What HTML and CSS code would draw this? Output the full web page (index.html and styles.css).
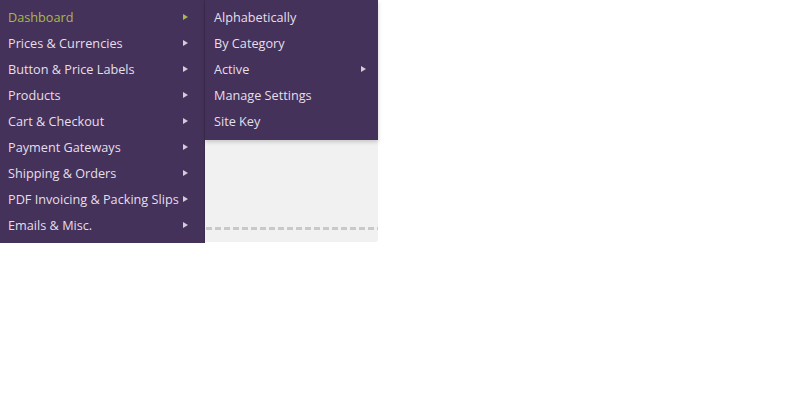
FILE: index.html
```
<!DOCTYPE html>
<html>
<head>
<meta charset="utf-8">
<link rel="stylesheet" href="styles.css">
</head>
<body>
<div class="page">
  <nav class="menu">
    <ul class="menu-list">
      <li class="menu-item active"><span class="label">Dashboard</span><span class="arrow"></span></li>
      <li class="menu-item"><span class="label">Prices &amp; Currencies</span><span class="arrow"></span></li>
      <li class="menu-item"><span class="label">Button &amp; Price Labels</span><span class="arrow"></span></li>
      <li class="menu-item"><span class="label">Products</span><span class="arrow"></span></li>
      <li class="menu-item"><span class="label">Cart &amp; Checkout</span><span class="arrow"></span></li>
      <li class="menu-item"><span class="label">Payment Gateways</span><span class="arrow"></span></li>
      <li class="menu-item"><span class="label">Shipping &amp; Orders</span><span class="arrow"></span></li>
      <li class="menu-item"><span class="label">PDF Invoicing &amp; Packing Slips</span><span class="arrow"></span></li>
      <li class="menu-item"><span class="label">Emails &amp; Misc.</span><span class="arrow"></span></li>
    </ul>
    <ul class="submenu">
      <li class="sub-item"><span class="label">Alphabetically</span></li>
      <li class="sub-item"><span class="label">By Category</span></li>
      <li class="sub-item"><span class="label">Active</span><span class="arrow"></span></li>
      <li class="sub-item"><span class="label">Manage Settings</span></li>
      <li class="sub-item"><span class="label">Site Key</span></li>
    </ul>
  </nav>
  <main class="content">
    <div class="dashes"></div>
  </main>
</div>
</body>
</html>
```
FILE: styles.css
```
html, body {
  margin: 0;
  padding: 0;
  background: #ffffff;
}
body {
  font-family: "Open Sans", "Liberation Sans", sans-serif;
  font-size: 12.7px;
}
.page {
  display: flex;
  align-items: flex-start;
}
.menu {
  position: relative;
  width: 205px;
  height: 243px;
  background: #45325a;
  box-sizing: border-box;
  border-right: 1px solid #3d2c50;
}
.menu-list, .submenu {
  list-style: none;
  margin: 0;
  padding: 4px 0 5px;
}
.menu-item, .sub-item {
  display: flex;
  align-items: center;
  justify-content: space-between;
  height: 26px;
  padding: 0 16px 0 8px;
  color: #e4dfe9;
}
.menu-item.active {
  color: #a9b84a;
}
.arrow {
  flex: none;
  width: 0;
  height: 0;
  border-top: 3.5px solid transparent;
  border-bottom: 3.5px solid transparent;
  border-left: 5px solid #d2cdd8;
}
.menu-item.active .arrow {
  border-left-color: #a9b84a;
}
.submenu {
  position: absolute;
  top: 0;
  left: 205px;
  width: 173px;
  box-sizing: border-box;
  padding: 4px 0 6px;
  background: #45325a;
  box-shadow: 0 2px 4px rgba(0, 0, 0, 0.18);
  z-index: 2;
}
.sub-item {
  padding: 0 12px 0 9px;
}
.content {
  width: 173px;
  height: 242px;
  background: #f1f1f1;
  border-radius: 0 0 3px 0;
  display: flex;
  flex-direction: column;
  justify-content: flex-end;
  padding-bottom: 12px;
  box-sizing: border-box;
}
.dashes {
  height: 3px;
  margin-left: 1px;
  background: repeating-linear-gradient(90deg, #c9c9c9 0 6px, transparent 6px 9px);
}
```
